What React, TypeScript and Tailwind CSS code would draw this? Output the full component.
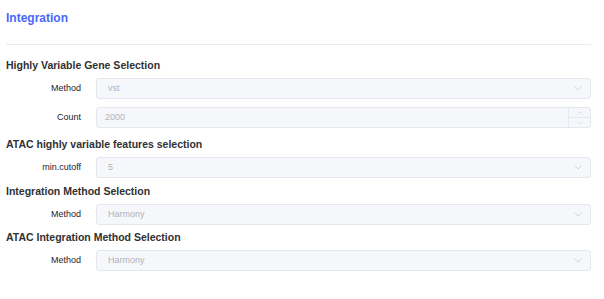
import React from 'react';

const font = { fontFamily: '"Liberation Sans", Arial, sans-serif' };

function Chevron({ up = false, small = false }: { up?: boolean; small?: boolean }) {
  const w = small ? 6 : 8;
  return (
    <svg width={w} height={small ? 4 : 5} viewBox="0 0 8 5" className="text-[#d3d6dc]">
      <path
        d={up ? 'M0.5 4.5L4 1L7.5 4.5' : 'M0.5 0.5L4 4L7.5 0.5'}
        fill="none"
        stroke="currentColor"
        strokeWidth="1"
      />
    </svg>
  );
}

function SelectBox({ value }: { value: string }) {
  return (
    <div className="flex-1 h-[21px] flex items-center justify-between rounded-[3px] border border-[#e4e7ed] bg-[#f5f7fa] pl-[11px] pr-[8px]">
      <span className="text-[9px] text-[#b0b3ba]">{value}</span>
      <Chevron />
    </div>
  );
}

function NumberBox({ value }: { value: string }) {
  return (
    <div className="flex-1 h-[21px] flex rounded-[3px] border border-[#e4e7ed] bg-[#f5f7fa]">
      <div className="flex-1 flex items-center pl-[8px] text-[9px] text-[#b0b3ba]">{value}</div>
      <div className="w-[22px] flex flex-col border-l border-[#e4e7ed]">
        <div className="flex-1 flex items-center justify-center border-b border-[#e4e7ed]">
          <Chevron up small />
        </div>
        <div className="flex-1 flex items-center justify-center">
          <Chevron small />
        </div>
      </div>
    </div>
  );
}

function Row({ label, children, className = '' }: { label: string; children: React.ReactNode; className?: string }) {
  return (
    <div className={`flex items-center ${className}`}>
      <div className="w-[75px] text-right text-[9px] text-[#1f2329]">{label}</div>
      <div className="ml-[15px] flex-1 flex">{children}</div>
    </div>
  );
}

function Header({ children, className = '' }: { children: React.ReactNode; className?: string }) {
  return (
    <div className={`h-[14px] leading-[14px] text-[10.5px] font-bold text-[#303133] ${className}`}>{children}</div>
  );
}

export default function App() {
  return (
    <div className="w-[604px] h-[299px] bg-white pl-[6px] pr-[13px]" style={font}>
      {/* Title */}
      <div className="h-[36px] flex items-center text-[12px] font-bold text-[#4768fa]">Integration</div>
      <div className="mt-[8px] h-px bg-[#e8eaee]" />

      <Header className="mt-[13px]">Highly Variable Gene Selection</Header>
      <Row label="Method" className="mt-[6px]">
        <SelectBox value="vst" />
      </Row>
      <Row label="Count" className="mt-[8px]">
        <NumberBox value="2000" />
      </Row>

      <Header className="mt-[9px]">ATAC highly variable features selection</Header>
      <Row label="min.cutoff" className="mt-[6px]">
        <SelectBox value="5" />
      </Row>

      <Header className="mt-[6px]">Integration Method Selection</Header>
      <Row label="Method" className="mt-[6px]">
        <SelectBox value="Harmony" />
      </Row>

      <Header className="mt-[5px]">ATAC Integration Method Selection</Header>
      <Row label="Method" className="mt-[6px]">
        <SelectBox value="Harmony" />
      </Row>
    </div>
  );
}
